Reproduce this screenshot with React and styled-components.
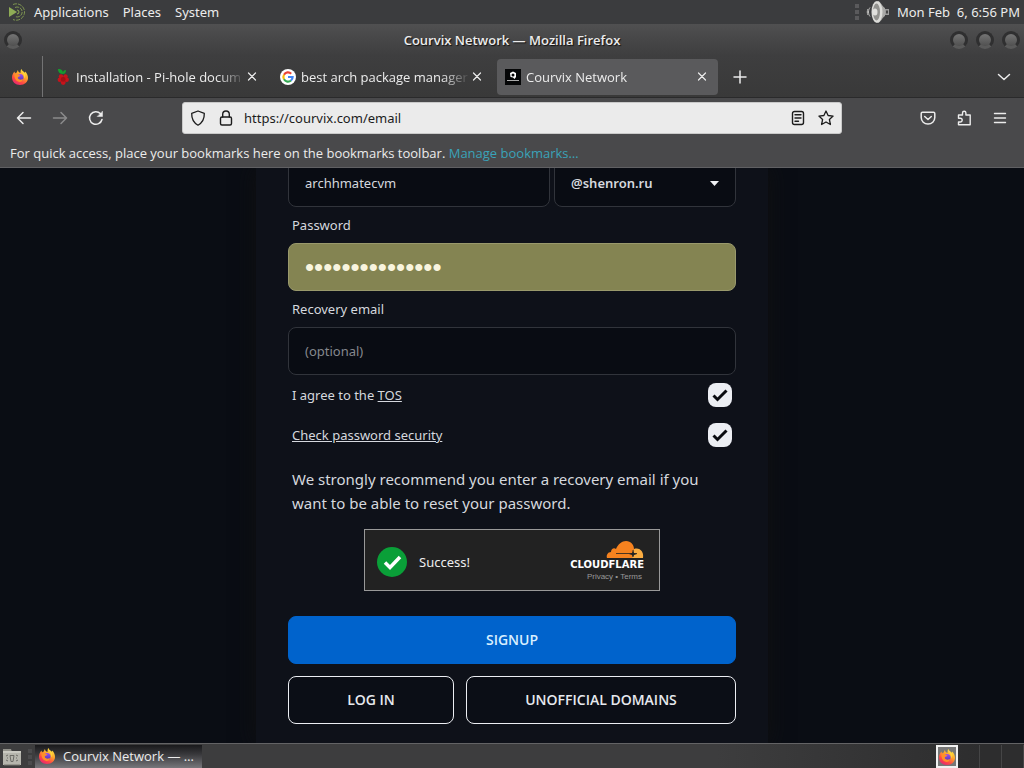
import React from "react";
import styled, { createGlobalStyle, css } from "styled-components";

const GlobalStyle = createGlobalStyle`
  * { box-sizing: border-box; }
  body {
    margin: 0;
    background: #3b3b3d;
    color: #ececec;
    font-family: "Open Sans", "Noto Sans", sans-serif;
    font-size: 13px;
  }
  button, input, select { font-family: inherit; font-size: inherit; color: inherit; margin: 0; }
  svg { display: block; flex: none; }
`;

const Desktop = styled.div`
  display: flex;
  flex-direction: column;
  height: 100vh;
  overflow: hidden;
`;

const PlainButton = styled.button`
  display: flex;
  align-items: center;
  justify-content: center;
  flex: none;
  padding: 0;
  border: 0;
  background: none;
`;

/* Desktop panel */

const TopPanel = styled.header`
  display: flex;
  align-items: center;
  flex: none;
  height: 24px;
  padding: 0 4px 0 8px;
  background: #3b3c3e;
  font-family: "Noto Sans", sans-serif;
`;

const PanelMenu = styled.nav`
  display: flex;
  align-items: center;
  gap: 14px;
  margin-left: 8px;
`;

const Tray = styled.div`
  display: flex;
  align-items: center;
  gap: 7px;
  margin-left: auto;
  white-space: pre;
`;

const Grip = styled.div`
  width: 4px;
  height: 16px;
  background: repeating-linear-gradient(#5a5a5c 0 4px, #3b3c3e 4px 6px);
`;

/* Browser chrome */

const TitleBar = styled.div`
  display: flex;
  align-items: center;
  justify-content: space-between;
  flex: none;
  height: 32px;
  padding: 0 4px;
  background: linear-gradient(#505051, #484849 40%, #3e3e3f);
  font-weight: 600;
  text-shadow: 1px 1px 1px #111;
`;

const TitleSide = styled.div`
  display: flex;
  gap: 8px;
  flex: 1;
  justify-content: ${(p) => (p.$end ? "flex-end" : "flex-start")};
`;

const Knob = styled.button`
  width: 18px;
  height: 18px;
  padding: 0;
  border: 3px solid #2f2f30;
  border-bottom-color: #5a5a5a;
  border-radius: 50%;
  background: linear-gradient(#747474, #505050);
`;

const TabStrip = styled.div`
  display: flex;
  align-items: center;
  flex: none;
  height: 42px;
  padding-right: 8px;
  border-bottom: 1px solid #2a2a2b;
  background: linear-gradient(#3e3e3f, #393939);
`;

const FirefoxView = styled(PlainButton)`
  align-self: stretch;
  width: 43px;
  margin-right: 4px;
  padding-right: 2px;
  border-right: 1px solid #737374;
`;

const Tabs = styled.div`
  display: flex;
  gap: 4px;
  flex: 0 1 671px;
  min-width: 0;
`;

const Tab = styled.div`
  display: flex;
  align-items: center;
  flex: 1 1 0;
  min-width: 0;
  height: 36px;
  padding: 0 9px 0 8px;
  border-radius: 4px;
  background: ${(p) => (p.$active ? "#5a5a5c" : "transparent")};
`;

const TabLabel = styled.span`
  flex: 1;
  min-width: 0;
  margin-left: 5px;
  overflow: hidden;
  white-space: nowrap;
  mask-image: linear-gradient(to right, #000 calc(100% - 28px), transparent);
`;

const TabClose = styled(PlainButton)`
  width: 14px;
  height: 16px;
`;

const StripButton = styled(PlainButton)`
  width: 24px;
  height: 32px;
  margin-left: ${(p) => (p.$end ? "auto" : "10px")};
`;

const NavBar = styled.div`
  display: flex;
  align-items: center;
  flex: none;
  height: 40px;
  padding: 0 6px;
  background: #49494b;
`;

const NavButton = styled(PlainButton)`
  width: 36px;
  height: 36px;
  opacity: ${(p) => (p.disabled ? 0.4 : 1)};
`;

const UrlBar = styled.div`
  display: flex;
  align-items: center;
  flex: 1;
  min-width: 0;
  height: 32px;
  margin: 0 68px;
  padding: 0 1px;
  border: 1px solid #c9c9c9;
  border-radius: 3px;
  background: #ebebeb;
  color: #1c1c1c;
`;

const UrlButton = styled(PlainButton)`
  width: 28px;
  height: 28px;
`;

const UrlInput = styled.input`
  flex: 1;
  min-width: 0;
  padding: 0 4px;
  border: 0;
  outline: 0;
  background: none;
  font-family: "Noto Sans", sans-serif;
`;

const BookmarkBar = styled.div`
  flex: none;
  height: 30px;
  padding: 0 10px;
  border-bottom: 1px solid #606063;
  background: #49494b;
  line-height: 30px;
  white-space: nowrap;
  overflow: hidden;

  a { color: #3aa3b9; text-decoration: none; }
`;

/* Web page */

const Page = styled.main`
  display: flex;
  justify-content: center;
  align-items: stretch;
  flex: 1;
  min-height: 0;
  overflow: hidden;
  background: #0a0d14;
`;

const Card = styled.form`
  display: flex;
  flex-direction: column;
  justify-content: flex-end;
  width: 100%;
  max-width: 512px;
  padding: 0 32px 19px;
  background: #0e1119;
  box-shadow: 0 0 20px #101010;
  font-family: "Noto Sans", sans-serif;
  color: #d5d8de;
`;

const Split = styled.div`
  display: grid;
  grid-template-columns: ${(p) => p.$columns};
  gap: ${(p) => p.$gap};
  flex: none;
`;

const FieldLabel = styled.label`
  flex: none;
  padding: 0 4px;
  line-height: 36px;
`;

const fieldBox = css`
  flex: none;
  width: 100%;
  height: 48px;
  padding: 0 16px;
  border: 1px solid #31343b;
  border-radius: 8px;
  outline: 0;
  background: #090c13;
`;

const Field = styled.input`
  ${fieldBox}
  &::placeholder { color: #85888e; opacity: 1; }
`;

const PasswordField = styled(Field)`
  border-color: #99996c;
  background: #848452;
  color: #f8f4de;
  font-family: "Liberation Sans", sans-serif;
  font-size: 26px;
`;

const SelectWrap = styled.div`
  display: grid;
  align-items: center;
  svg { grid-area: 1 / 1; justify-self: end; margin-right: 17px; pointer-events: none; }
`;

const DomainSelect = styled.select`
  ${fieldBox}
  grid-area: 1 / 1;
  appearance: none;
  font-weight: 600;
`;

const CheckRow = styled.div`
  display: flex;
  align-items: center;
  justify-content: space-between;
  flex: none;
  height: 40px;
  padding: 0 4px;
  a { color: inherit; }
`;

const CheckWrap = styled.span`
  display: grid;
  place-items: center;
  svg { grid-area: 1 / 1; pointer-events: none; }
`;

const Checkbox = styled.input`
  grid-area: 1 / 1;
  appearance: none;
  width: 24px;
  height: 24px;
  border-radius: 8px;
  background: #eceef3;
`;

const Advice = styled.p`
  flex: none;
  margin: 12px 4px 14px;
  font-size: 15px;
  line-height: 24px;
`;

const Turnstile = styled.section`
  display: flex;
  align-items: center;
  align-self: center;
  flex: none;
  width: 296px;
  height: 62px;
  margin-bottom: 25px;
  padding: 3px 15px 0 12px;
  border: 1px solid #999;
  background: #222;
  color: #eee;
`;

const SuccessText = styled.span`
  flex: 1;
  margin-left: 12px;
`;

const Brand = styled.div`
  display: flex;
  flex-direction: column;
  align-items: flex-end;
`;

const BrandName = styled.span`
  margin-top: 1px;
  font: 900 10px/10px "DejaVu Sans", sans-serif;
  color: #fff;
`;

const BrandLinks = styled.small`
  margin: 1px 2px 0 0;
  font: 8px/12px "Liberation Sans", sans-serif;
  color: #999;
  a { color: inherit; text-decoration: none; }
`;

const FormButton = styled.button`
  flex: none;
  width: 100%;
  height: 48px;
  padding: 0 0 2px;
  border: 1px solid ${(p) => (p.$primary ? "#0063cc" : "#eceef3")};
  border-radius: 8px;
  background: ${(p) => (p.$primary ? "#0063cc" : "#0b0e16")};
  color: ${(p) => (p.$primary ? "#d9efff" : "#e7e9ee")};
  font-family: "Open Sans", sans-serif;
  font-size: 14px;
  font-weight: 600;
`;

const Actions = styled(Split)`
  margin-top: 12px;
`;

/* Bottom panel */

const TaskBar = styled.footer`
  display: flex;
  align-items: stretch;
  flex: none;
  height: 25px;
  padding: 1px 0 0 2px;
  border-top: 1px solid #636365;
  background: linear-gradient(to right, #3d3d3e 70%, #2d2d2e 96%);
`;

const Task = styled.button`
  display: flex;
  align-items: center;
  gap: 8px;
  width: 167px;
  margin-left: 3px;
  padding: 0 4px 2px;
  border: 0;
  background: linear-gradient(#19191b, #38383b 40%, #77777b);
  white-space: nowrap;
`;

const TaskGrip = styled(Grip)`
  align-self: center;
  margin-left: 6px;
  opacity: 0.5;
`;

const Switcher = styled.div`
  display: flex;
  margin-left: auto;
`;

const Workspace = styled(PlainButton)`
  width: 22px;
  border: ${(p) => (p.$current ? "2px solid #f1f1f1" : "0 solid #454546")};
  border-right-width: ${(p) => (p.$current ? "2px" : "1px")};
  background: ${(p) => (p.$current ? "#777" : "none")};
`;

const Firefox = ({ size = 16 }) => (
  <svg width={size} height={size} viewBox="0 0 32 32" aria-hidden="true">
    <defs>
      <linearGradient id="flame" x1="0.8" y1="0" x2="0.2" y2="1">
        <stop offset="0" stopColor="#ffef45" />
        <stop offset="0.4" stopColor="#ffa12b" />
        <stop offset="0.7" stopColor="#ff4b43" />
        <stop offset="1" stopColor="#e22078" />
      </linearGradient>
      <linearGradient id="globe" x1="0" y1="0" x2="0" y2="1">
        <stop offset="0" stopColor="#9a4df5" />
        <stop offset="1" stopColor="#513bb0" />
      </linearGradient>
    </defs>
    <path fill="url(#flame)" d="M19 0c1 4 4 5 6 8 1-1 1-2 1-3 4 3 6 8 6 13 0 8-7 14-16 14S0 26 0 17c0-5 2-9 5-12l1 4c1-1 2-2 4-2 0-2 1-4 2-5 0 3 2 5 5 6 0-3 0-6 2-8z" />
    <circle cx="16" cy="17" r="7" fill="url(#globe)" />
    <path fill="#ff9029" d="M5 10c4-1 8 0 9 2l3 1c-1 2-4 2-5 3-1 2 0 4 3 5 3 1 5-1 7 0-1 4-6 6-10 4-5-2-8-8-7-15z" />
    <path fill="#ffd43b" d="M19 2c0 5 7 9 5 17 4-4 3-9 1-12-2-2-5-3-6-5z" />
  </svg>
);

const MateLogo = () => (
  <svg width="18" height="18" viewBox="0 0 18 18" fill="none" aria-hidden="true">
    <path d="M1 4l8 5-8 5z" fill="#8fac56" />
    <path d="M5 1.5A8.2 8.2 0 1 1 5 16.500M7 4.500a5 5 0 1 1 0 9" stroke="#8fac56" strokeDasharray="4 1" strokeWidth="0.8" />
    <path d="M9 7a2 2 0 0 1 0 4" stroke="#8fac56" />
  </svg>
);

const Speaker = () => (
  <svg width="24" height="24" viewBox="0 0 24 24" aria-hidden="true">
    <path d="M18 9h5v6h-5z" fill="#9b9b9b" />
    <path d="M20 10.500h2v3h-2z" fill="#444" />
    <path d="M12 1c3 1 4 5 7 7v8c-3 2-4 6-7 7z" fill="#a9a9a7" />
    <path d="M4 7.500c-2 2.500-2 6.500 0 9M2 9c-1 2-1 4 0 6" fill="none" stroke="#c2c2c0" />
    <ellipse cx="11" cy="12" rx="5.500" ry="11" fill="#dcdcd9" />
    <ellipse cx="10.500" cy="12" rx="3.500" ry="8.500" fill="#92928f" />
    <ellipse cx="9" cy="12" rx="2.500" ry="3.500" fill="#e0e0dd" />
  </svg>
);

const Raspberry = () => (
  <svg width="16" height="16" viewBox="0 0 16 16" aria-hidden="true">
    <path d="M8 5C4 5 3 2 3 0c4 0 5 2 5 4 0-2 1-3 3-3 0 2-1 4-3 4z" fill="#159d30" />
    <g fill="#c6131b">
      <circle cx="6" cy="7.500" r="2.200" /><circle cx="10.500" cy="7.500" r="2.200" />
      <circle cx="4.800" cy="10.800" r="2.200" /><circle cx="11.700" cy="10.800" r="2.200" />
      <circle cx="8.200" cy="13.500" r="2.400" />
    </g>
    <circle cx="8.200" cy="10.400" r="2.400" fill="#a01015" />
  </svg>
);

const Google = () => (
  <svg width="16" height="16" viewBox="0 0 16 16" aria-hidden="true">
    <circle cx="8" cy="8" r="8" fill="#fff" />
    <g fill="none" strokeWidth="2.200">
      <path d="M4 5.700A4.600 4.600 0 0 1 11.200 4.700" stroke="#ea4335" />
      <path d="M4 5.700a4.600 4.600 0 0 0 0 4.600" stroke="#fbbc05" />
      <path d="M4 10.300a4.600 4.600 0 0 0 7 1.200" stroke="#34a853" />
      <path d="M8 8h4.600a4.600 4.600 0 0 1-1.600 3.500" stroke="#4285f4" />
    </g>
  </svg>
);

const CourvixMark = () => (
  <svg width="16" height="16" viewBox="0 0 16 16" aria-hidden="true">
    <path d="M0 0h16v16H0z" fill="#050607" />
    <path d="M5 4l3-1.500L11 4v4L9.500 10 8 8.500 5.500 8z" fill="#fff" />
    <circle cx="8" cy="6" r="1.500" fill="#050607" />
    <path d="M2 11.500h12" stroke="#aaa" />
  </svg>
);

const Line = ({ size = 16, width = 1.5, children }) => (
  <svg width={size} height={size} viewBox="0 0 16 16" fill="none" stroke="currentColor" strokeWidth={width} strokeLinecap="round" strokeLinejoin="round" aria-hidden="true">
    {children}
  </svg>
);

const Close = () => <Line width={1.2}><path d="M4.500 4l7 7M11.500 4l-7 7" /></Line>;

const Tick = () => (
  <svg width="24" height="24" viewBox="0 0 24 24" fill="none" aria-hidden="true">
    <path d="M5.500 12.500l4 4 9-9" stroke="#090b10" strokeWidth="3" />
  </svg>
);

const SuccessMark = () => (
  <svg width="30" height="30" viewBox="0 0 30 30" fill="none" aria-hidden="true">
    <circle cx="15" cy="15" r="15" fill="#0a9f38" />
    <path d="M8 15.500l5 5L23 10" stroke="#fff" strokeWidth="3.500" />
  </svg>
);

const Cloud = () => (
  <svg width="38" height="18" viewBox="0 0 38 18" aria-hidden="true">
    <path d="M1 17c-1-3 1-6 4-6 0-3 3-5 5-3C12 3 16 0 20 0c5 0 8 4 8 8l-2 9z" fill="#f6821f" />
    <path d="M26 17l2-9c6-2 10 3 9 9z" fill="#fbad41" />
    <path d="M10 12.500h21M27 9v7" stroke="#222" strokeWidth="0.8" />
    <path d="M27 10l1 2 3 1-3 1-1 2-1-2-3-1 3-1z" fill="#222" />
  </svg>
);

const Folder = () => (
  <svg width="20" height="20" viewBox="0 0 20 20" aria-hidden="true">
    <path d="M1 5V2h8l1 3z" fill="#91918a" />
    <path d="M1 4h18v14H1z" fill="#b5b5ad" />
    <path d="M1 5h18" stroke="#deded7" />
    <path d="M8 8.500h4l-1 6H9zM4 9l2-1M14 8l2 1M4 13l2 1M14 14l2-1M5 11h1M14 11h1" fill="none" stroke="#6b6b66" />
    <path d="M2 18h16" stroke="#77776f" />
  </svg>
);

const tabs = [
  { title: "Installation - Pi-hole docum", icon: <Raspberry /> },
  { title: "best arch package manager", icon: <Google /> },
  { title: "Courvix Network", icon: <CourvixMark />, active: true },
];

const ConsentCheck = ({ id }) => (
  <CheckWrap>
    <Checkbox type="checkbox" id={id} defaultChecked />
    <Tick />
  </CheckWrap>
);

export default function App() {
  return (
    <Desktop>
      <GlobalStyle />
      <TopPanel>
        <MateLogo />
        <PanelMenu>
          <PlainButton>Applications</PlainButton>
          <PlainButton>Places</PlainButton>
          <PlainButton>System</PlainButton>
        </PanelMenu>
        <Tray>
          <Grip />
          <Speaker />
          <span>Mon Feb  6, 6:56 PM</span>
        </Tray>
      </TopPanel>

      <TitleBar>
        <TitleSide><Knob aria-label="Window menu" /></TitleSide>
        <span>Courvix Network — Mozilla Firefox</span>
        <TitleSide $end>
          <Knob aria-label="Minimize" />
          <Knob aria-label="Maximize" />
          <Knob aria-label="Close window" />
        </TitleSide>
      </TitleBar>

      <TabStrip>
        <FirefoxView aria-label="Firefox View"><Firefox /></FirefoxView>
        <Tabs>
          {tabs.map((tab) => (
            <Tab key={tab.title} $active={tab.active}>
              {tab.icon}
              <TabLabel>{tab.title}</TabLabel>
              <TabClose aria-label="Close tab"><Close /></TabClose>
            </Tab>
          ))}
        </Tabs>
        <StripButton aria-label="New tab"><Line><path d="M8 2v12M2 8h12" /></Line></StripButton>
        <StripButton $end aria-label="List all tabs"><Line><path d="M2.500 5.500L8 10.500l5.500-5" /></Line></StripButton>
      </TabStrip>

      <NavBar>
        <NavButton aria-label="Back"><Line><path d="M14.500 8H1.500M7 2.500L1.500 8 7 13.500" /></Line></NavButton>
        <NavButton aria-label="Forward" disabled><Line><path d="M1.500 8h13M9 2.500L14.500 8 9 13.500" /></Line></NavButton>
        <NavButton aria-label="Reload">
          <Line><path d="M14 9.500A6.300 6.300 0 1 1 12.500 3.700" /><path d="M14.500 1.500v5h-5z" fill="currentColor" strokeWidth="0.500" /></Line>
        </NavButton>
        <UrlBar>
          <UrlButton aria-label="Tracking protection">
            <Line width={1.3}><path d="M8 1l6.300 2.300C14.500 9 12 13 8 15.200 4 13 1.500 9 1.700 3.300z" /></Line>
          </UrlButton>
          <UrlButton aria-label="Site information">
            <Line width={1.4}><rect x="2.500" y="7" width="11" height="8" rx="1.500" /><path d="M4.700 7V4.300a3.300 3.300 0 0 1 6.600 0V7" /></Line>
          </UrlButton>
          <UrlInput aria-label="Address" defaultValue="https://courvix.com/email" />
          <UrlButton aria-label="Reader view">
            <Line width={1.4}><rect x="2.500" y="1.500" width="11" height="13" rx="2" /><path d="M5 4.800h6M5 8h6M5 11.200h3.500" /></Line>
          </UrlButton>
          <UrlButton aria-label="Bookmark this page">
            <Line width={1.3}><path d="M8 1l2.100 4.500 5 .6-3.700 3.400 1 5L8 12l-4.400 2.500 1-5L.9 6.100l5-.6z" /></Line>
          </UrlButton>
        </UrlBar>
        <NavButton aria-label="Save to Pocket">
          <Line><path d="M2.500 2.300h11c.8 0 1.300.5 1.300 1.300v4a6.800 6.500 0 0 1-13.600 0v-4c0-.8.500-1.300 1.300-1.300z" /><path d="M4.700 6.500L8 9.500l3.300-3" /></Line>
        </NavButton>
        <NavButton aria-label="Extensions">
          <Line width={1.4}><path d="M2.500 8.200V5h4V3a1.700 1.700 0 0 1 3.400 0v2h4.300v9.700H2.500v-2.700h1.800a1.900 1.900 0 0 0 0-3.800z" /></Line>
        </NavButton>
        <NavButton aria-label="Menu"><Line width={1.4}><path d="M2.500 3.500h11M2.500 8h11M2.500 12.500h11" /></Line></NavButton>
      </NavBar>
      <BookmarkBar>
        For quick access, place your bookmarks here on the bookmarks toolbar. <a href="#bookmarks">Manage bookmarks…</a>
      </BookmarkBar>

      <Page>
        <Card onSubmit={(e) => e.preventDefault()}>
          <Split $columns="262fr 182fr" $gap="4px">
            <Field aria-label="Username" defaultValue="archhmatecvm" />
            <SelectWrap>
              <DomainSelect aria-label="Domain"><option>@shenron.ru</option></DomainSelect>
              <svg width="9" height="5" viewBox="0 0 9 5" aria-hidden="true"><path d="M0 0h9L4.500 5z" fill="#f0f1f4" /></svg>
            </SelectWrap>
          </Split>
          <FieldLabel htmlFor="password">Password</FieldLabel>
          <PasswordField id="password" type="password" defaultValue="abcdefghijklmno" />
          <FieldLabel htmlFor="recovery">Recovery email</FieldLabel>
          <Field id="recovery" type="email" placeholder="(optional)" />
          <CheckRow>
            <label htmlFor="tos">I agree to the <a href="#tos">TOS</a></label>
            <ConsentCheck id="tos" />
          </CheckRow>
          <CheckRow>
            <label htmlFor="security"><a href="#security">Check password security</a></label>
            <ConsentCheck id="security" />
          </CheckRow>
          <Advice>We strongly recommend you enter a recovery email if you want to be able to reset your password.</Advice>
          <Turnstile>
            <SuccessMark />
            <SuccessText>Success!</SuccessText>
            <Brand>
              <Cloud />
              <BrandName>CLOUDFLARE</BrandName>
              <BrandLinks><a href="#privacy">Privacy</a> • <a href="#terms">Terms</a></BrandLinks>
            </Brand>
          </Turnstile>
          <FormButton type="submit" $primary>SIGNUP</FormButton>
          <Actions $columns="166fr 270fr" $gap="12px">
            <FormButton type="button">LOG IN</FormButton>
            <FormButton type="button">UNOFFICIAL DOMAINS</FormButton>
          </Actions>
        </Card>
      </Page>

      <TaskBar>
        <PlainButton aria-label="Show desktop"><Folder /></PlainButton>
        <TaskGrip />
        <Task><Firefox />Courvix Network — …</Task>
        <Switcher>
          <Workspace $current aria-label="Workspace 1"><Firefox /></Workspace>
          <Workspace aria-label="Workspace 2" />
          <Workspace aria-label="Workspace 3" />
          <Workspace aria-label="Workspace 4" />
        </Switcher>
      </TaskBar>
    </Desktop>
  );
}
